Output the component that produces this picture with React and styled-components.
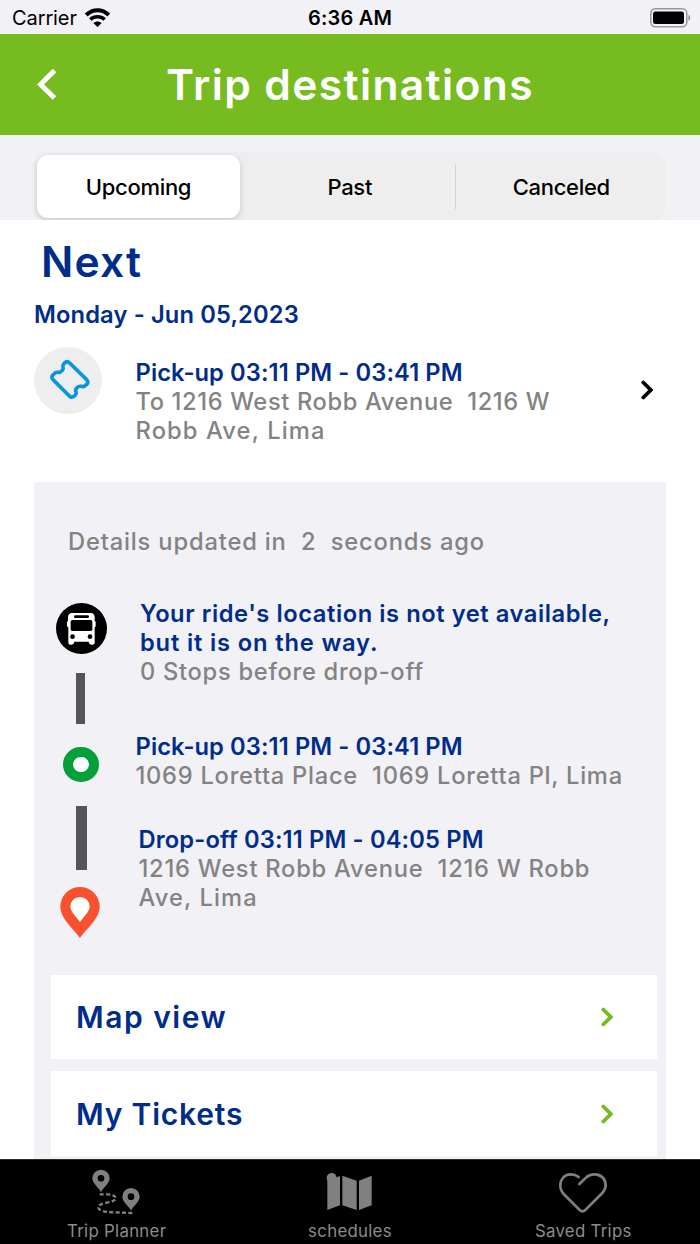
import { useState } from 'react';
import styled, { createGlobalStyle } from 'styled-components';

const tabs = ['Upcoming', 'Past', 'Canceled'];

const App = () => {
  const [active, setActive] = useState('Upcoming');
  return (
    <Screen>
      <GlobalStyle />
      <StatusBar>
        <Carrier>
          Carrier <WifiIcon />
        </Carrier>
        <Clock>6:36 AM</Clock>
        <BatteryIcon />
      </StatusBar>
      <Header>
        <BackIcon />
        <Title>Trip destinations</Title>
      </Header>
      <SegmentStrip>
        <SegmentedControl>
          {tabs.map((tab, i) => (
            <Segment
              key={tab}
              $active={tab === active}
              $divider={i === 2}
              onClick={() => setActive(tab)}>
              {tab}
            </Segment>
          ))}
        </SegmentedControl>
      </SegmentStrip>
      <Content>
        <SectionTitle>Next</SectionTitle>
        <TripDate $track={0.14}>Monday - Jun 05,2023</TripDate>
        <TripRow>
          <TicketBadge>
            <TicketIcon />
          </TicketBadge>
          <TripInfo>
            <Line $blue $track={0.1}>Pick-up 03:11 PM - 03:41 PM</Line>
            <Line $track={0.62}>To 1216 West Robb Avenue&nbsp; 1216 W</Line>
            <Line $track={1.12}>Robb Ave, Lima</Line>
          </TripInfo>
          <ArrowIcon color='#000' />
        </TripRow>
        <DetailsPanel>
          <Updated $track={0.84}>Details updated in&nbsp; 2&nbsp; seconds ago</Updated>
          <Timeline>
            <Rail>
              <BusIcon />
              <Bar $width={8.7} $height={51} $top={18.5} />
              <Ring />
              <Bar $width={10.5} $height={64} $top={23.5} />
              <PinIcon />
            </Rail>
            <Stops>
              <Stop $indent={4.5} $height={132.5}>
                <Line $blue $track={0.57}>Your ride's location is not yet available,</Line>
                <Line $blue $track={0.84}>but it is on the way.</Line>
                <Line $track={0.71}>0 Stops before drop-off</Line>
              </Stop>
              <Stop $indent={0} $height={93.5}>
                <Line $blue $track={0.1}>Pick-up 03:11 PM - 03:41 PM</Line>
                <Line $track={0.74}>1069 Loretta Place&nbsp; 1069 Loretta Pl, Lima</Line>
              </Stop>
              <Stop $indent={3} $height={90}>
                <Line $blue $track={0.15}>Drop-off 03:11 PM - 04:05 PM</Line>
                <Line $track={0.77}>1216 West Robb Avenue&nbsp; 1216 W Robb</Line>
                <Line $track={1.1}>Ave, Lima</Line>
              </Stop>
            </Stops>
          </Timeline>
          <Actions>
            <ActionRow>
              <ActionLabel $track={1.5}>Map view</ActionLabel>
              <ArrowIcon color='#76bc21' />
            </ActionRow>
            <ActionRow>
              <ActionLabel $track={0.8}>My Tickets</ActionLabel>
              <ArrowIcon color='#76bc21' />
            </ActionRow>
          </Actions>
        </DetailsPanel>
      </Content>
      <BottomNav>
        <NavItem>
          <RouteIcon />
          Trip Planner
        </NavItem>
        <NavItem>
          <MapIcon />
          schedules
        </NavItem>
        <NavItem>
          <HeartIcon />
          Saved Trips
        </NavItem>
      </BottomNav>
    </Screen>
  );
};

const WifiIcon = () => (
  <svg width='25' height='19' viewBox='0 0 75 57'>
    <g fill='none' stroke='#000'>
      <path d='M3.500 21 C23 1.500 52 1.500 71.500 21' strokeWidth='12' />
      <path d='M16 34.500 C28 23.500 47 23.500 59 34.500' strokeWidth='11' />
    </g>
    <path d='M25 45 C32 38.500 43 38.500 50 45 L37.500 57 Z' />
  </svg>
);

const BatteryIcon = () => (
  <svg width='42' height='20' viewBox='0 0 42 20'>
    <rect x='0.800' y='0.800' width='36' height='18' rx='4.500' fill='none' stroke='#98979c' strokeWidth='1.500' />
    <rect x='3' y='3.500' width='31' height='12.500' rx='2.500' fill='#000' />
    <path d='M38.500 6.500 Q42 9.800 38.500 13 Z' fill='#87868b' />
  </svg>
);

const BackIcon = () => (
  <svg width='20' height='32' viewBox='0 0 20 32'>
    <path d='M17.500 1.500 L3.500 15.500 L17.500 29' fill='none' stroke='#fff' strokeWidth='5' />
  </svg>
);

const ArrowIcon = ({ color }) => (
  <svg width='12' height='20' viewBox='0 0 12 20'>
    <path d='M2.300 2.500 L9.800 10 L2.300 17.500' fill='none' stroke={color} strokeWidth='3.800' strokeLinecap='round' />
  </svg>
);

const TicketIcon = () => (
  <svg width='68' height='68' viewBox='102 35 204 204'>
    <path
      d='M195 82 Q202 76 209 83 L260 133 Q267 141 260 147 L254 152 Q250 155 244 153 Q236 152 230 158 Q225 164 228 170 Q230 175 226 179 L222 183 Q215 188 208 182 L159 133 Q152 125 159 119 L165 113 Q169 110 174 111 Q181 112 187 105 Q191 100 189 95 Q188 90 191 86 Z'
      fill='none'
      stroke='#0796df'
      strokeWidth='11'
      strokeLinejoin='round'
    />
  </svg>
);

const BusIcon = () => (
  <Bus width='51' height='51' viewBox='0 0 153 153'>
    <circle cx='76.500' cy='76.500' r='76.500' />
    <path
      d='M47 30 H105 Q115 31 116 42 V53 Q119 54 119 59 V68 Q119 72 116 73 V120 Q115 126 108 125 Q99 125 98 116 H55 Q54 125 45 125 Q38 126 37 120 V73 Q33 72 33 68 V59 Q33 54 36 53 V42 Q37 31 47 30 Z'
      fill='#fff'
    />
    <rect x='54' y='37' width='45' height='8' rx='4' />
    <rect x='44' y='51' width='65' height='33' rx='5' />
    <circle cx='49.500' cy='101' r='7' />
    <circle cx='102' cy='101' r='7' />
  </Bus>
);

const PinIcon = () => (
  <Pin width='40' height='51' viewBox='0 0 120 153'>
    <path d='M60 153 C45 129 1 96 1 59 A59 59 0 0 1 119 59 C119 96 75 129 60 153 Z' fill='#f9512f' />
    <path d='M60 105 C51 92 31 75 31 58 A29 28 0 0 1 89 58 C89 75 69 92 60 105 Z' fill='#fff' />
  </Pin>
);

const RouteIcon = () => (
  <svg width='50' height='46' viewBox='275 57 150 138'>
    <path
      d='M302 127 C296 113 276 101 276 85 A26 26 0 0 1 328 85 C328 101 308 113 302 127 Z M302 75 A10 10 0 1 0 302 95 A10 10 0 1 0 302 75 Z'
      fill='#808080'
      fillRule='evenodd'
    />
    <path
      d='M392 182 C386 168 366 156 366 140 A26 26 0 0 1 418 140 C418 156 398 168 392 182 Z M392 130 A10 10 0 1 0 392 150 A10 10 0 1 0 392 130 Z'
      fill='#808080'
      fillRule='evenodd'
    />
    <path
      d='M298 133 H320 Q345 134 346 145 Q345 154 320 158 Q294 162 294 173 Q295 185 340 187 L398 189'
      fill='none'
      stroke='#808080'
      strokeWidth='7'
      strokeDasharray='12 7'
    />
  </svg>
);

const MapIcon = () => (
  <svg width='50' height='46' viewBox='975 57 150 138'>
    <g fill='#808080'>
      <circle cx='995' cy='84' r='15' />
      <path d='M982 86 L1005 84 L1020 78 V166 L982 180 Z' />
      <path d='M1027 77 L1070 92 V180 L1027 166 Z' />
      <path d='M1077 92 L1115 77 V166 L1077 180 Z' />
    </g>
  </svg>
);

const HeartIcon = () => (
  <svg width='50' height='46' viewBox='174 57 150 138'>
    <path
      d='M236 81 Q226 73 212 73 C192 73 181 89 181 107 C181 119 186 127 194 135 L240 181 Q247.500 187 255 181 L304 132 C312 124 317 116 317 105 C317 86 302 73 284 73 C272 73 264 77 258 83 L238 102'
      fill='none'
      stroke='#808080'
      strokeWidth='8'
      strokeLinecap='round'
    />
  </svg>
);

const GlobalStyle = createGlobalStyle`
  * {
    box-sizing: border-box;
  }
  body {
    margin: 0;
    background: #fff;
    font-family: Inter, 'Liberation Sans', sans-serif;
  }
  svg {
    display: block;
    flex-shrink: 0;
  }
`;

const Screen = styled.div`
  width: 700px;
  height: 1244px;
  display: flex;
  flex-direction: column;
  overflow: hidden;
  background: #fff;
`;

const StatusBar = styled.div`
  height: 34px;
  flex-shrink: 0;
  display: grid;
  grid-template-columns: 1fr auto 1fr;
  align-items: center;
  padding: 1px 8px 0;
  background: #f2f1f6;
  font-size: 20px;

  > svg {
    justify-self: end;
  }
`;

const Carrier = styled.div`
  display: flex;
  align-items: center;
  gap: 8px;
  padding-left: 4px;
  letter-spacing: -0.1px;
`;

const Clock = styled.div`
  font-weight: 600;
  letter-spacing: 0.2px;
`;

const Header = styled.header`
  height: 101px;
  flex-shrink: 0;
  display: flex;
  align-items: center;
  padding-left: 37px;
  background: #76bc21;
`;

const Title = styled.h1`
  margin: 0 0 0 109px;
  color: #fff;
  font-size: 42.500px;
  font-weight: 600;
  line-height: 50px;
  letter-spacing: 1.4px;
  white-space: nowrap;
`;

const SegmentStrip = styled.div`
  height: 85px;
  flex-shrink: 0;
  padding: 17px 34px 0;
  overflow: hidden;
  background: #f2f1f6;
`;

const SegmentedControl = styled.div`
  height: 70px;
  display: grid;
  grid-template-columns: 206px 212px 1fr;
  align-items: start;
  padding: 3px 0 0 3px;
  border-radius: 16px;
  background: #eee;
`;

const Segment = styled.button`
  height: 63px;
  margin: 0 ${({ $active }) => ($active ? '3px' : '0')} 0 0;
  padding: 0 0 0 ${({ $active }) => ($active ? '0' : '1.500px')};
  border: none;
  border-radius: ${({ $active }) => ($active ? '11px' : '0')};
  background: ${({ $active, $divider }) =>
    $active
      ? '#fff'
      : $divider
        ? 'linear-gradient(#d2d2d4, #d2d2d4) 0 9px / 1px 45px no-repeat'
        : 'transparent'};
  box-shadow: ${({ $active }) => ($active ? '0 2px 6px rgba(0, 0, 0, 0.16)' : 'none')};
  color: #000;
  font: ${({ $active }) => ($active ? 500 : 450)} 22px/65px Inter, sans-serif;
  letter-spacing: -0.3px;
`;

const Content = styled.main`
  flex: 1;
  min-height: 0;
  padding: 0 34px;
  overflow: hidden;
`;

const SectionTitle = styled.h2`
  margin: 17px 0 0 7px;
  color: #002d8a;
  font-size: 42.500px;
  font-weight: 600;
  line-height: 50px;
  letter-spacing: 1.2px;
`;

const Line = styled.div`
  color: ${({ $blue }) => ($blue ? '#002d8a' : '#838383')};
  font-size: 23.700px;
  font-weight: ${({ $blue }) => ($blue ? 600 : 500)};
  line-height: 29px;
  letter-spacing: ${({ $track }) => $track}px;
  white-space: nowrap;
`;

const TripDate = styled(Line).attrs({ $blue: true })`
  margin-top: 13px;
`;

const TripRow = styled.div`
  height: 153px;
  display: flex;
  align-items: flex-start;
  padding: 18px 13px 0 0;

  > svg {
    margin-top: 33px;
  }
`;

const TicketBadge = styled.div`
  width: 68px;
  height: 67px;
  border-radius: 50%;
  background: #eee;
`;

const TripInfo = styled.div`
  flex: 1;
  margin: 11px 0 0 33.500px;
`;

const DetailsPanel = styled.section`
  height: 700px;
  padding: 45px 9px 0 17px;
  background: #f2f1f6;
`;

const Updated = styled(Line)`
  margin-left: 17px;
`;

const Timeline = styled.div`
  height: 418.800px;
  display: flex;
  padding-top: 43px;
`;

const Rail = styled.div`
  width: 60px;
  display: flex;
  flex-direction: column;
  align-items: flex-start;
  padding-top: 4px;
`;

const Bus = styled.svg`
  margin-left: 5px;
`;

const Bar = styled.div`
  width: ${({ $width }) => $width}px;
  height: ${({ $height }) => $height}px;
  margin: ${({ $top }) => $top}px 0 0 25px;
  background: #555;
`;

const Ring = styled.div`
  width: 35.500px;
  height: 35.500px;
  margin: 23px 0 0 12px;
  border: 10.500px solid #05a039;
  border-radius: 50%;
  background: #fff;
`;

const Pin = styled.svg`
  margin: 17px 0 0 9px;
`;

const Stops = styled.div`
  margin-left: 24.500px;
`;

const Stop = styled.div`
  height: ${({ $height }) => $height}px;
  padding-left: ${({ $indent }) => $indent}px;
`;

const Actions = styled.div`
  display: flex;
  flex-direction: column;
  gap: 12px;
`;

const ActionRow = styled.div`
  height: 84.500px;
  display: flex;
  align-items: center;
  justify-content: space-between;
  padding: 0 44px 0 25px;
  background: #fff;
`;

const ActionLabel = styled.div`
  color: #002d8a;
  font-size: 30px;
  font-weight: 600;
  letter-spacing: ${({ $track }) => $track}px;
`;

const BottomNav = styled.nav`
  height: 85px;
  flex-shrink: 0;
  display: grid;
  grid-template-columns: repeat(3, 1fr);
  border-top: 1px solid #2b2b2d;
  background: #000;
`;

const NavItem = styled.div`
  display: flex;
  flex-direction: column;
  align-items: center;
  padding-top: 9px;
  color: #8c8c8c;
  font-size: 16.800px;
  line-height: 33px;
  letter-spacing: 0.3px;
`;

export default App;
